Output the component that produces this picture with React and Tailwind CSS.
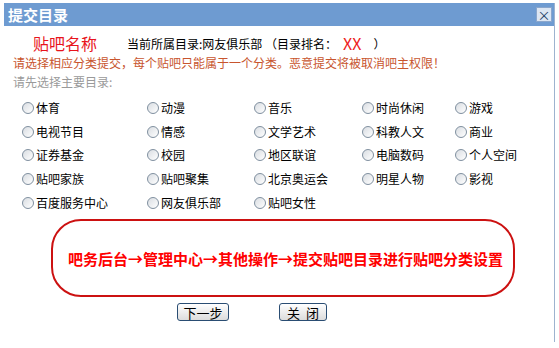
import React from "react";

const font = { fontFamily: '"Noto Sans CJK SC", "Liberation Sans", sans-serif' };

const rows = [
  ["体育", "动漫", "音乐", "时尚休闲", "游戏"],
  ["电视节目", "情感", "文学艺术", "科教人文", "商业"],
  ["证券基金", "校园", "地区联谊", "电脑数码", "个人空间"],
  ["贴吧家族", "贴吧聚集", "北京奥运会", "明星人物", "影视"],
  ["百度服务中心", "网友俱乐部", "贴吧女性"],
];

function Radio({ label }) {
  return (
    <label className="flex items-center h-[23.7px] text-[12px] leading-none text-black">
      <span className="inline-block w-[12px] h-[12px] rounded-full border border-[#7f8f9f] bg-gradient-to-br from-[#d9dde2] to-[#ffffff] mr-[2px] shrink-0" />
      <span>{label}</span>
    </label>
  );
}

export default function App() {
  return (
    <div className="w-[559px] h-[348px] bg-white overflow-hidden" style={font}>
      <div className="ml-[4px] mt-[3px] w-[551px] h-[339px] border-r border-[#9db3cf] flex flex-col">
        <div className="h-[23px] bg-[#6e9bd1] flex items-center justify-between pl-[4px] pr-[2px] shrink-0">
          <span className="text-white font-bold text-[15px] leading-none">提交目录</span>
          <span className="w-[16px] h-[15px] bg-[#dce6f3] border border-[#8aa6cc] flex items-center justify-center text-[#1c3c66] text-[13px] leading-none">×</span>
        </div>
        <div className="flex items-end h-[25px] pl-[29px]">
          <span className="text-[16px] leading-none text-[#e8141c] w-[94px]">贴吧名称</span>
          <span className="text-[12px] leading-none text-black pb-[1px]">当前所属目录:网友俱乐部 （目录排名：</span>
          <span className="text-[16px] leading-none text-[#ee1c1c] ml-[6px]">XX</span>
          <span className="text-[12px] leading-none text-black pb-[1px] ml-[12px]">）</span>
        </div>
        <div className="h-[20px] flex items-center pl-[9px] pt-[4px] text-[12px] leading-none text-[#c8552e]">
          请选择相应分类提交，每个贴吧只能属于一个分类。恶意提交将被取消吧主权限！
        </div>
        <div className="h-[19px] flex items-center pl-[9px] pt-[2px] text-[12px] leading-none text-[#9a9a9a]">
          请先选择主要目录:
        </div>
        <div className="pl-[18px] grid grid-cols-[125px_107px_108px_93px_100px] pt-[6px]">
          {rows.flatMap((r, i) =>
            [0, 1, 2, 3, 4].map((j) =>
              r[j] ? <Radio key={i + "-" + j} label={r[j]} /> : <span key={i + "-" + j} />
            )
          )}
        </div>
        <div className="ml-[47px] mt-[5px] w-[464px] h-[78px] border-2 border-[#cc1111] rounded-[30px] flex items-center pl-[15px]">
          <span className="text-[15px] font-bold text-[#ff0000] leading-none whitespace-nowrap">
            吧务后台→管理中心→其他操作→提交贴吧目录进行贴吧分类设置
          </span>
        </div>
        <div className="flex mt-[6px] pl-[173px] gap-[50px]">
          <button className="w-[52px] h-[18px] border border-[#2a4d73] rounded-[3px] bg-gradient-to-b from-[#ffffff] to-[#dcdcdc] text-[13px] leading-none text-black flex items-center justify-center">
            下一步
          </button>
          <button className="w-[48px] h-[18px] border border-[#2a4d73] rounded-[3px] bg-gradient-to-b from-[#ffffff] to-[#dcdcdc] text-[13px] leading-none text-black flex items-center justify-center">
            关&nbsp;&nbsp;闭
          </button>
        </div>
      </div>
    </div>
  );
}
